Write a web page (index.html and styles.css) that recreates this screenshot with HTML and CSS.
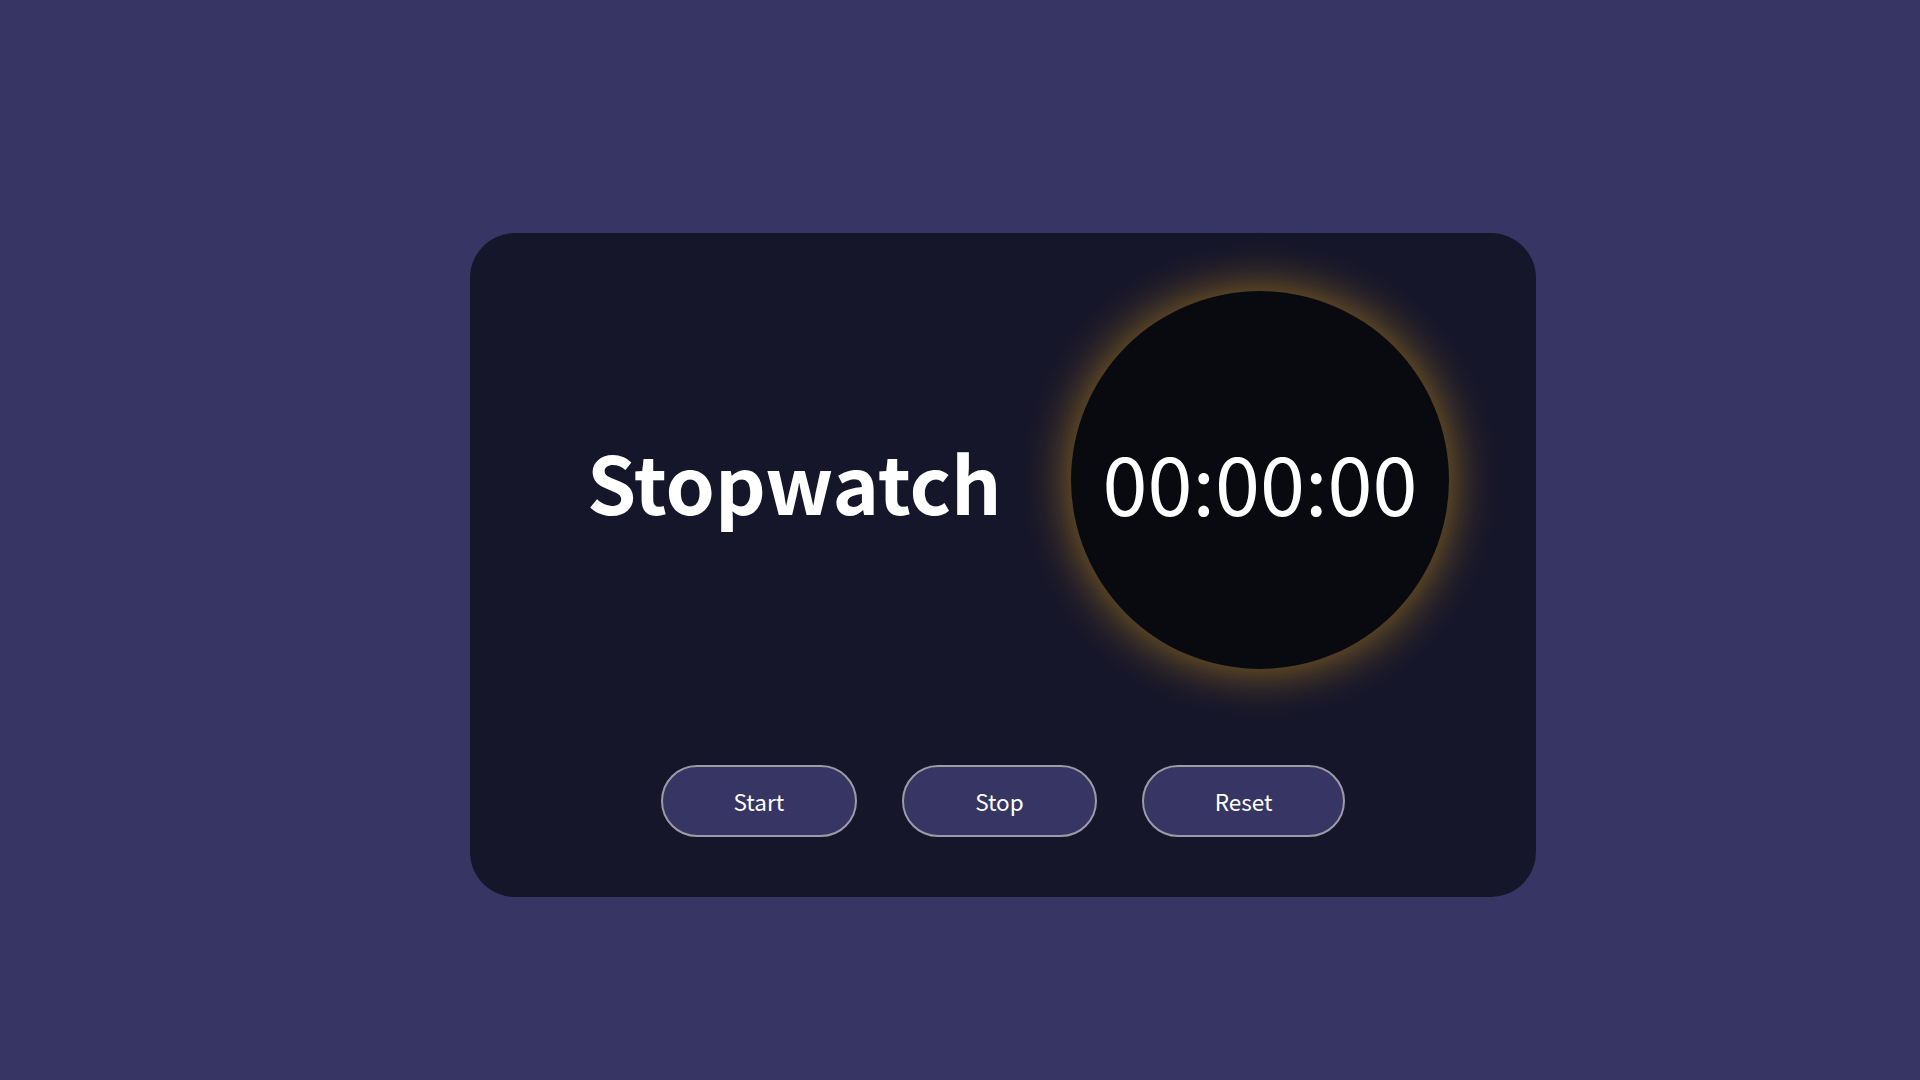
FILE: index.html
```html
<!DOCTYPE html>
<html lang="en">
<head>
<meta charset="utf-8">
<title>Stopwatch</title>
<link rel="stylesheet" href="styles.css">
</head>
<body>
  <main class="card">
    <div class="top">
      <h1 class="title">Stopwatch</h1>
      <div class="dial"><span class="time">00:00:00</span></div>
    </div>
    <div class="controls">
      <button class="btn">Start</button>
      <button class="btn">Stop</button>
      <button class="btn">Reset</button>
    </div>
  </main>
</body>
</html>
```
FILE: styles.css
```css
html, body {
  margin: 0;
  padding: 0;
}
body {
  width: 1920px;
  height: 1080px;
  background: #373564;
  font-family: "Noto Sans CJK SC", "Noto Sans", sans-serif;
  overflow: hidden;
}
.card {
  box-sizing: border-box;
  width: 1066px;
  height: 664px;
  margin: 233px 0 0 470px;
  background: #16162a;
  border-radius: 45px;
  padding: 58px 0 60px 0;
  display: flex;
  flex-direction: column;
}
.top {
  display: flex;
  align-items: center;
  justify-content: space-between;
  padding: 0 87px 0 117px;
}
.title {
  margin: 0;
  color: #ffffff;
  font-size: 79px;
  font-weight: 700;
  line-height: 1;
}
.dial {
  flex: none;
  width: 378px;
  height: 378px;
  border-radius: 50%;
  background: #090a10;
  box-shadow: 0 0 50px rgba(255, 183, 20, 0.55);
  display: flex;
  align-items: center;
  justify-content: center;
}
.time {
  color: #ffffff;
  font-size: 81px;
  font-weight: 400;
  line-height: 1;
}
.controls {
  margin-top: auto;
  display: flex;
  justify-content: center;
  gap: 45px;
}
.btn {
  height: 72px;
  padding: 0 71px;
  background: #373564;
  color: #ffffff;
  border: 2px solid #9e9aa6;
  border-radius: 36px;
  font-family: "Noto Sans CJK SC", "Noto Sans", sans-serif;
  font-size: 22.5px;
  line-height: 1;
}
```
